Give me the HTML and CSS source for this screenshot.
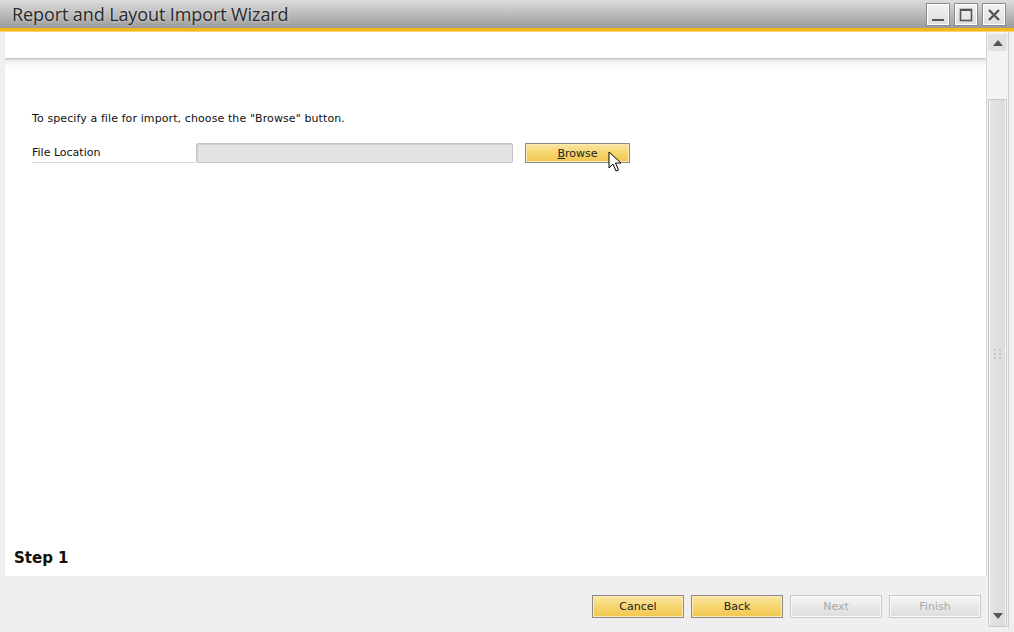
FILE: index.html
```html
<!DOCTYPE html>
<html>
<head>
<meta charset="utf-8">
<title>Report and Layout Import Wizard</title>
<link rel="stylesheet" href="styles.css">
</head>
<body>
<div class="window">
  <div class="titlebar">
    <div class="title">Report and Layout Import Wizard</div>
    <div class="controls">
      <div class="ctl"><svg width="16" height="16" viewBox="0 0 16 16"><rect x="2" y="12" width="12" height="2" fill="#555"/></svg></div>
      <div class="ctl"><svg width="16" height="16" viewBox="0 0 16 16"><rect x="2.5" y="2.5" width="11" height="11" fill="none" stroke="#555" stroke-width="1.6"/><rect x="2" y="2" width="12" height="2" fill="#555"/></svg></div>
      <div class="ctl"><svg width="16" height="16" viewBox="0 0 16 16"><path d="M3 3 L13 13 M13 3 L3 13" stroke="#555" stroke-width="2.4"/></svg></div>
    </div>
  </div>
  <div class="accent"></div>
  <div class="frame">
    <div class="main">
      <div class="header"></div>
      <div class="divider"></div>
      <div class="content">
        <p class="hint">To specify a file for import, choose the "Browse" button.</p>
        <div class="row">
          <label class="lbl">File Location</label>
          <div class="input"></div>
          <button class="btn yellow browse"><u>B</u>rowse</button>
        </div>
      </div>
      <div class="step">Step 1</div>
      <div class="footer">
        <button class="btn yellow fbtn">Cancel</button>
        <button class="btn yellow fbtn">Back</button>
        <button class="btn disabled fbtn">Next</button>
        <button class="btn disabled fbtn">Finish</button>
      </div>
    </div>
    <div class="scrollbar">
      <div class="sb-up"><svg width="10" height="6" viewBox="0 0 10 6"><path d="M0 6 L5 0 L10 6 Z" fill="#555"/></svg></div>
      <div class="sb-track"></div>
      <div class="sb-thumb">
        <svg class="grip" width="8" height="10" viewBox="0 0 8 10">
          <rect x="0" y="0" width="2" height="2" fill="#c4c4c4"/><rect x="5" y="0" width="2" height="2" fill="#c4c4c4"/>
          <rect x="0" y="4" width="2" height="2" fill="#c4c4c4"/><rect x="5" y="4" width="2" height="2" fill="#c4c4c4"/>
          <rect x="0" y="8" width="2" height="2" fill="#c4c4c4"/><rect x="5" y="8" width="2" height="2" fill="#c4c4c4"/>
        </svg>
        <div class="sb-down"><svg width="10" height="6" viewBox="0 0 10 6"><path d="M0 0 L10 0 L5 6 Z" fill="#555"/></svg></div>
      </div>
    </div>
  </div>
  <svg class="cursor" width="14" height="22" viewBox="0 0 14 22"><path d="M1 1 L1 17 L5 13 L8 20 L10.5 19 L7.5 12 L13 12 Z" fill="#fff" stroke="#000" stroke-width="1" stroke-linejoin="round"/></svg>
</div>
</body>
</html>
```
FILE: styles.css
```css
* { box-sizing: border-box; }
html, body { margin: 0; padding: 0; }
body { width: 1014px; height: 632px; overflow: hidden; background: #f2f2f2; font-family: "Noto Sans", "Open Sans", sans-serif; }
.window { position: relative; width: 1014px; height: 632px; display: flex; flex-direction: column; background: #efefef; }
.titlebar { height: 28px; display: flex; align-items: center; justify-content: space-between; background: linear-gradient(#dcdcdc, #b8b8b8 55%, #9c9c9c); }
.title { padding-left: 12px; font-family: "Open Sans", "Noto Sans", sans-serif; font-size: 18px; color: #2a2a2a; letter-spacing: -0.1px; text-shadow: 0 0 3px rgba(255,255,255,0.6); }
.controls { display: flex; gap: 4px; padding-right: 8px; padding-top: 1px; }
.ctl { width: 24px; height: 23px; border: 1px solid #8c8c8c; background: linear-gradient(#f2f2f2, #dedede); display: flex; align-items: center; justify-content: center; box-shadow: inset 0 0 0 1px #fff; }
.accent { height: 4px; background: #f5b81c; border-bottom: 1px solid #f9d572; }
.frame { flex: 1; display: flex; padding-left: 5px; padding-right: 5px; padding-bottom: 3px; background: #efefef; }
.main { flex: 1; display: flex; flex-direction: column; background: #fff; border-right: 1px solid #d4d4d4; }
.header { height: 26px; background: #fff; }
.divider { height: 12px; border-top: 1px solid #c4c4c4; border-bottom: 0; background: linear-gradient(#e6e6e6, #f7f7f7 40%, #fff); box-shadow: inset 0 1px 0 #dcdcdc; }
.content { flex: 1; padding: 42px 0 0 27px; font-size: 11px; color: #111; }
.hint { margin: 0 0 18px 0; font-family: "DejaVu Sans", sans-serif; font-size: 11px; line-height: 13px; letter-spacing: 0.1px; }
.row { display: flex; align-items: center; height: 20px; }
.lbl { width: 164px; height: 20px; line-height: 20px; font-family: "DejaVu Sans", sans-serif; font-size: 11px; border-bottom: 1px solid #d8d8d8; }
.input { width: 317px; height: 20px; background: #e3e3e3; border: 1px solid #c6c6c6; border-radius: 2px; box-shadow: inset 1px 1px 0 #d0d0d0; }
.btn { font-family: "DejaVu Sans", sans-serif; font-size: 11px; color: #222; border: 1px solid #8a8a8a; padding: 0; cursor: default; }
.yellow { background: linear-gradient(#fbe7a3, #f6d46c 55%, #f0c64e); box-shadow: inset 0 0 0 1px #fbeab4; }
.disabled { color: #a8a8a8; border-color: #c8c8c8; background: linear-gradient(#f6f6f6, #e6e6e6 60%, #dedede); box-shadow: inset 0 0 0 1px #fafafa; }
.browse { margin-left: 12px; width: 105px; height: 20px; }
.step { height: 30px; padding-left: 9px; padding-top: 3px; font-family: "DejaVu Sans", sans-serif; font-weight: bold; font-size: 15px; color: #111; text-shadow: 0 0 1px rgba(255,170,0,0.3); }
.footer { height: 53px; background: #efefef; display: flex; justify-content: flex-end; align-items: flex-start; gap: 7px; padding-top: 19px; padding-right: 6px; margin-right: -1px; }
.fbtn { width: 92px; height: 23px; font-size: 11px; flex: none; }
.scrollbar { width: 22px; display: flex; flex-direction: column; background: #f3f3f3; border-right: 1px solid #cfcfcf; padding: 2px 1px 2px 1px; }
.sb-up { height: 17px; background: #e2e2e2; display: flex; align-items: center; justify-content: center; }
.sb-track { height: 48px; background: #f3f3f3; }
.sb-thumb { flex: 1; border: 1px solid #c8c8c8; background: linear-gradient(90deg, #e4e4e4, #dcdcdc); box-shadow: inset 1px 0 0 #f6f6f6, inset -1px 0 0 #f6f6f6; display: flex; flex-direction: column; align-items: center; justify-content: flex-end; }
.grip { margin-bottom: 247px; }
.sb-down { height: 20px; width: 100%; display: flex; align-items: center; justify-content: center; }
.cursor { position: absolute; left: 608px; top: 151px; }
```
